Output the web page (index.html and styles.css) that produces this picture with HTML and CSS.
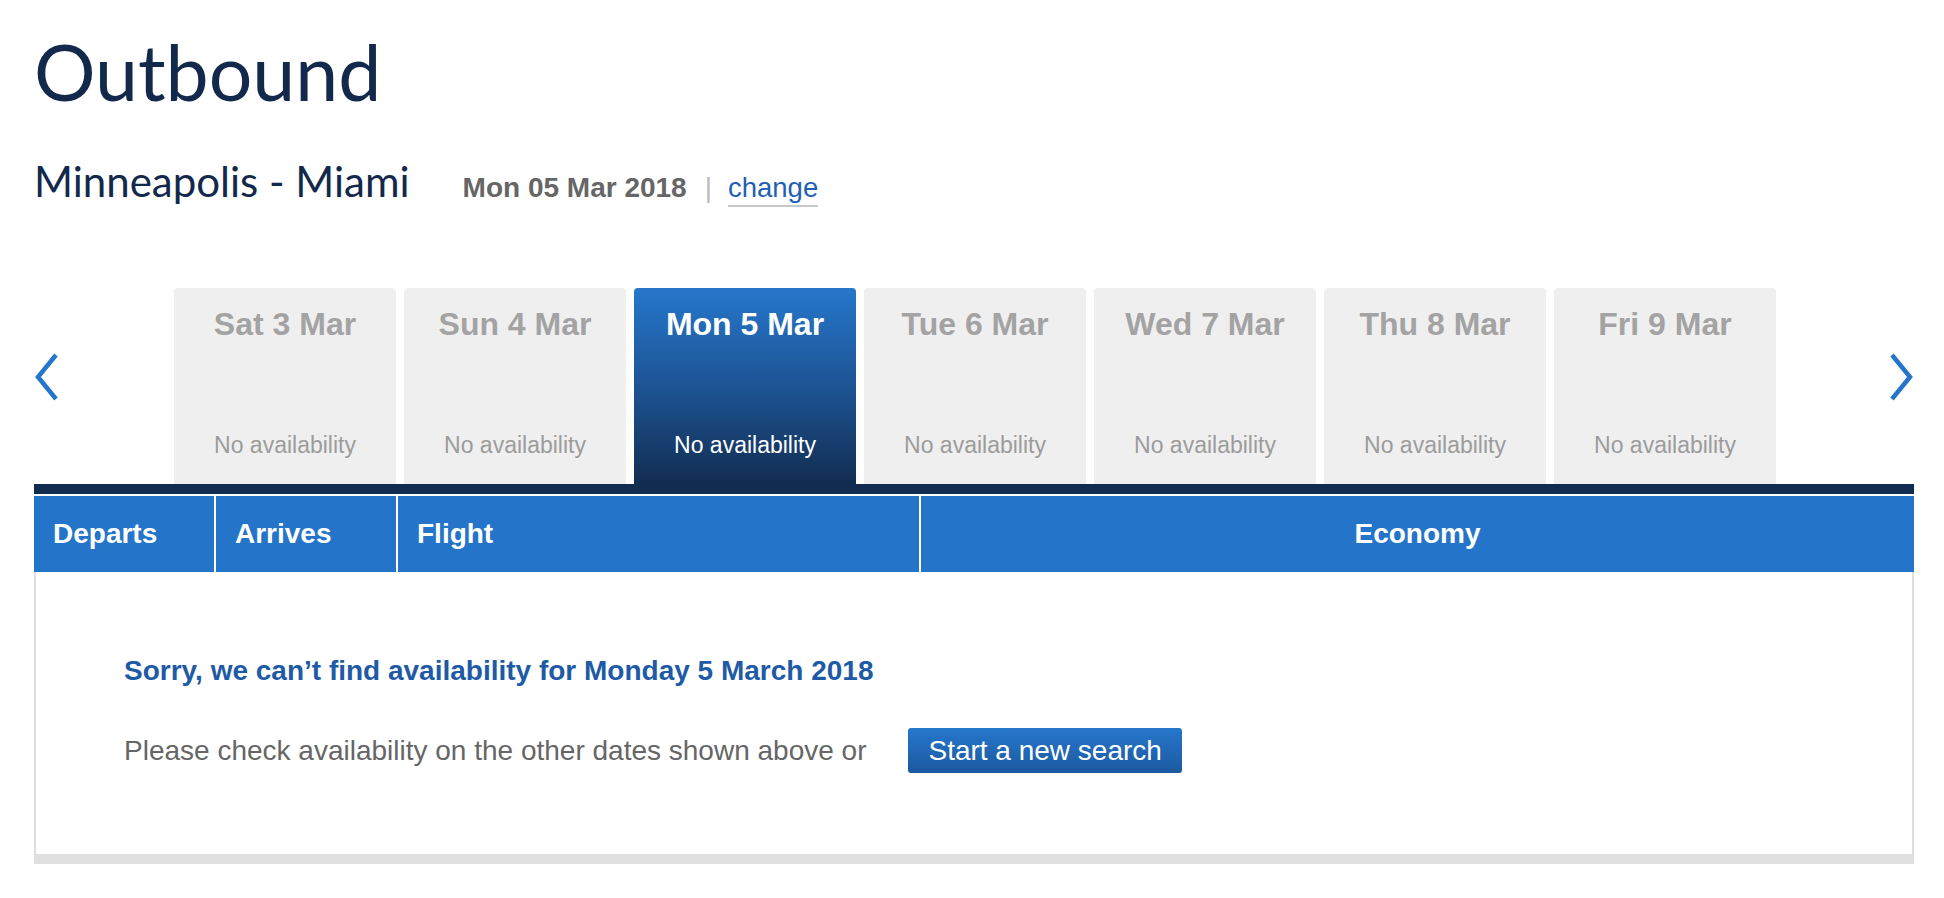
FILE: index.html
```html
<!DOCTYPE html>
<html lang="en">
<head>
<meta charset="utf-8">
<title>Outbound</title>
<link rel="stylesheet" href="styles.css">
</head>
<body>
<main class="page">
  <h1 class="title">Outbound</h1>
  <div class="route">
    <h2 class="route-name">Minneapolis - Miami</h2>
    <span class="route-date">Mon 05 Mar 2018</span>
    <span class="route-sep">|</span>
    <a class="route-change" href="#">change</a>
  </div>

  <div class="dates">
    <div class="nav nav-prev">
      <svg class="chev" viewBox="0 0 26 50" width="26" height="50"><polyline points="22,3 4,25 22,47" fill="none" stroke="#2476cc" stroke-width="4.5"/></svg>
    </div>
    <div class="tabs">
      <div class="tab"><span class="tab-day">Sat 3 Mar</span><span class="tab-avail">No availability</span></div>
      <div class="tab"><span class="tab-day">Sun 4 Mar</span><span class="tab-avail">No availability</span></div>
      <div class="tab tab-active"><span class="tab-day">Mon 5 Mar</span><span class="tab-avail">No availability</span></div>
      <div class="tab"><span class="tab-day">Tue 6 Mar</span><span class="tab-avail">No availability</span></div>
      <div class="tab"><span class="tab-day">Wed 7 Mar</span><span class="tab-avail">No availability</span></div>
      <div class="tab"><span class="tab-day">Thu 8 Mar</span><span class="tab-avail">No availability</span></div>
      <div class="tab"><span class="tab-day">Fri 9 Mar</span><span class="tab-avail">No availability</span></div>
    </div>
    <div class="nav nav-next">
      <svg class="chev" viewBox="0 0 26 50" width="26" height="50"><polyline points="4,3 22,25 4,47" fill="none" stroke="#2476cc" stroke-width="4.5"/></svg>
    </div>
  </div>

  <div class="bar"></div>
  <div class="thead">
    <div class="th">Departs</div>
    <div class="th">Arrives</div>
    <div class="th">Flight</div>
    <div class="th th-center">Economy</div>
  </div>
  <div class="results">
    <p class="sorry">Sorry, we can’t find availability for Monday 5 March 2018</p>
    <div class="retry">
      <span class="retry-text">Please check availability on the other dates shown above or</span>
      <a class="btn" href="#">Start a new search</a>
    </div>
  </div>
</main>
</body>
</html>
```

FILE: styles.css
```css
* { box-sizing: border-box; }
html, body { margin: 0; padding: 0; background: #fff; }
body { font-family: "Liberation Sans", Arial, sans-serif; }

.page {
  width: 1944px;
  padding: 0 30px 0 34px;
}

.title {
  margin: 0;
  padding-top: 24px;
  font-family: Lato, "Open Sans", sans-serif;
  font-weight: 400;
  font-size: 77px;
  line-height: 95px;
  color: #13294b;
}

.route {
  display: flex;
  align-items: baseline;
  margin-top: 37px;
  height: 60px;
}
.route-name {
  margin: 0;
  font-family: Lato, "Open Sans", sans-serif;
  font-weight: 400;
  font-size: 42px;
  color: #13294b;
}
.route-date {
  margin-left: 53px;
  font-size: 28px;
  font-weight: bold;
  color: #666;
}
.route-sep {
  margin-left: 18px;
  font-size: 28px;
  color: #bbb;
}
.route-change {
  margin-left: 16px;
  font-size: 27.5px;
  color: #1f5fb4;
  text-decoration: none;
  border-bottom: 2px solid #c8c8c8;
  line-height: 34px;
}

.dates {
  display: flex;
  align-items: stretch;
  margin-top: 72px;
  height: 196px;
}
.nav {
  display: flex;
  align-items: center;
  width: 140px;
  padding-bottom: 18px;
}
.nav-next {
  width: 138px;
  justify-content: flex-end;
}
.chev { display: block; }

.tabs {
  display: flex;
  gap: 8px;
}
.tab {
  width: 222px;
  display: flex;
  flex-direction: column;
  justify-content: space-between;
  align-items: center;
  padding: 18px 0 26px;
  background: #efefef;
  border-radius: 4px 4px 0 0;
}
.tab-day {
  font-size: 32px;
  font-weight: bold;
  line-height: 37px;
  color: #a3a3a3;
}
.tab-avail {
  font-size: 23px;
  line-height: 26px;
  color: #9c9c9c;
}
.tab-active {
  background: linear-gradient(to bottom, #2677cc 0%, #1d5494 50%, #122d52 100%);
}
.tab-active .tab-day,
.tab-active .tab-avail { color: #fff; }

.bar {
  height: 10px;
  background: #112c50;
}

.thead {
  display: grid;
  grid-template-columns: 180px 180px 521px 1fr;
  gap: 2px;
  margin-top: 2px;
  background: #fff;
}
.th {
  height: 76px;
  display: flex;
  align-items: center;
  padding-left: 19px;
  background: #2475c9;
  color: #fff;
  font-size: 28px;
  font-weight: bold;
}
.th-center {
  justify-content: center;
  padding-left: 0;
}

.results {
  border-left: 2px solid #dddddd;
  border-right: 2px solid #dddddd;
  border-bottom: 10px solid #e0e0e0;
  padding: 83px 0 81px 88px;
}
.sorry {
  margin: 0;
  font-size: 28px;
  line-height: 31px;
  font-weight: bold;
  color: #1e5aa5;
}
.retry {
  display: flex;
  align-items: center;
  margin-top: 42px;
}
.retry-text {
  font-size: 28px;
  color: #666;
}
.btn {
  margin-left: 42px;
  height: 45px;
  padding: 0 20px;
  display: flex;
  align-items: center;
  border-radius: 3px;
  background: linear-gradient(to bottom, #2677cc, #1c59a0);
  color: #fff;
  font-size: 28px;
  text-decoration: none;
}
```
